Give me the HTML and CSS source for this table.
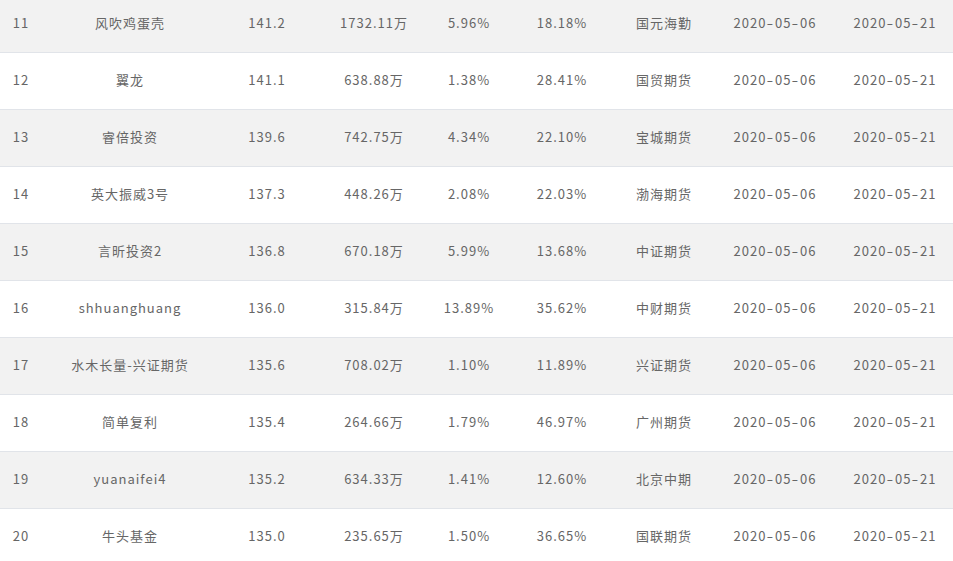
FILE: index.html
```html
<!DOCTYPE html>
<html lang="zh-CN">
<head>
<meta charset="utf-8">
<title>排行</title>
<link rel="stylesheet" href="styles.css">
</head>
<body>
<div class="rank-table">
  <div class="row odd"><span>11</span><span>风吹鸡蛋壳</span><span>141.2</span><span>1732.11万</span><span>5.96%</span><span>18.18%</span><span>国元海勤</span><span class="date">2020<i>-</i>05<i>-</i>06</span><span class="date">2020<i>-</i>05<i>-</i>21</span></div>
  <div class="row"><span>12</span><span>翼龙</span><span>141.1</span><span>638.88万</span><span>1.38%</span><span>28.41%</span><span>国贸期货</span><span class="date">2020<i>-</i>05<i>-</i>06</span><span class="date">2020<i>-</i>05<i>-</i>21</span></div>
  <div class="row odd"><span>13</span><span>睿倍投资</span><span>139.6</span><span>742.75万</span><span>4.34%</span><span>22.10%</span><span>宝城期货</span><span class="date">2020<i>-</i>05<i>-</i>06</span><span class="date">2020<i>-</i>05<i>-</i>21</span></div>
  <div class="row"><span>14</span><span>英大振威3号</span><span>137.3</span><span>448.26万</span><span>2.08%</span><span>22.03%</span><span>渤海期货</span><span class="date">2020<i>-</i>05<i>-</i>06</span><span class="date">2020<i>-</i>05<i>-</i>21</span></div>
  <div class="row odd"><span>15</span><span>言昕投资2</span><span>136.8</span><span>670.18万</span><span>5.99%</span><span>13.68%</span><span>中证期货</span><span class="date">2020<i>-</i>05<i>-</i>06</span><span class="date">2020<i>-</i>05<i>-</i>21</span></div>
  <div class="row"><span>16</span><span>shhuanghuang</span><span>136.0</span><span>315.84万</span><span>13.89%</span><span>35.62%</span><span>中财期货</span><span class="date">2020<i>-</i>05<i>-</i>06</span><span class="date">2020<i>-</i>05<i>-</i>21</span></div>
  <div class="row odd"><span>17</span><span>水木长量-兴证期货</span><span>135.6</span><span>708.02万</span><span>1.10%</span><span>11.89%</span><span>兴证期货</span><span class="date">2020<i>-</i>05<i>-</i>06</span><span class="date">2020<i>-</i>05<i>-</i>21</span></div>
  <div class="row"><span>18</span><span>简单复利</span><span>135.4</span><span>264.66万</span><span>1.79%</span><span>46.97%</span><span>广州期货</span><span class="date">2020<i>-</i>05<i>-</i>06</span><span class="date">2020<i>-</i>05<i>-</i>21</span></div>
  <div class="row odd"><span>19</span><span>yuanaifei4</span><span>135.2</span><span>634.33万</span><span>1.41%</span><span>12.60%</span><span>北京中期</span><span class="date">2020<i>-</i>05<i>-</i>06</span><span class="date">2020<i>-</i>05<i>-</i>21</span></div>
  <div class="row"><span>20</span><span>牛头基金</span><span>135.0</span><span>235.65万</span><span>1.50%</span><span>36.65%</span><span>国联期货</span><span class="date">2020<i>-</i>05<i>-</i>06</span><span class="date">2020<i>-</i>05<i>-</i>21</span></div>
</div>
</body>
</html>
```

FILE: styles.css
```css
html, body {
  margin: 0;
  padding: 0;
  background: #fff;
  overflow: hidden;
}
.rank-table {
  margin-top: -4px;
  font-family: "Noto Sans CJK SC", "Noto Sans", sans-serif;
  font-size: 13px;
  letter-spacing: 1px;
  color: #666;
}
.row {
  display: grid;
  grid-template-columns: 42px 176px 98px 116px 74px 112px 92px 130px 110px;
  height: 56px;
  align-items: center;
  border-bottom: 1px solid #e1e4e9;
  background: #fff;
}
.row.odd {
  background: #f2f2f2;
}
.row span {
  text-align: center;
  white-space: nowrap;
  position: relative;
  top: -2px;
}
.row .date i {
  font-style: normal;
  display: inline-block;
  margin: 0 1.5px;
  transform: scaleX(1.5);
}
```
